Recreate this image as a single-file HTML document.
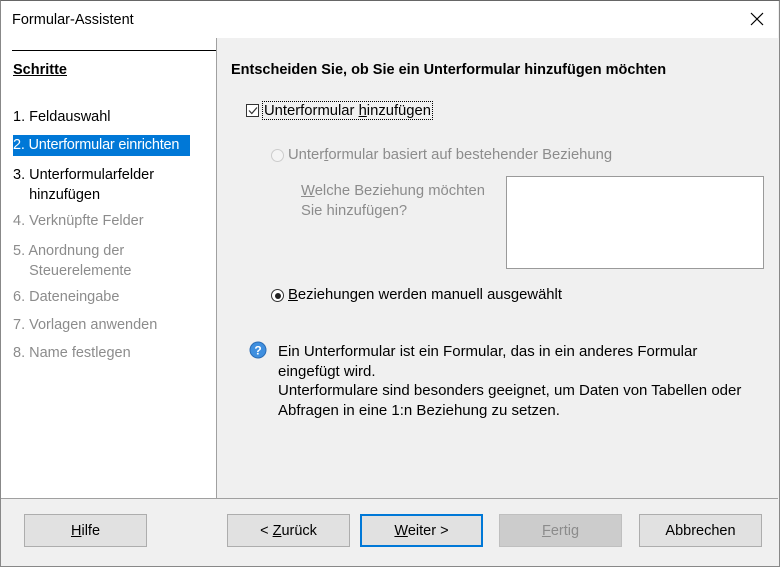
<!DOCTYPE html>
<html><head><meta charset="utf-8"><style>
*{margin:0;padding:0;box-sizing:border-box}
body{width:780px;height:567px;background:#f0f0f0;font-family:"Liberation Sans",sans-serif;font-size:14.5px;color:#000;position:relative;overflow:hidden}
.a{position:absolute;white-space:nowrap}
.frame{position:absolute;left:0;top:0;width:780px;height:567px;border:1px solid #888;border-top-color:#666}
.title{position:absolute;left:1px;top:1px;width:777px;height:37px;background:#fff}
.left{position:absolute;left:1px;top:38px;width:216px;height:460px;background:#fff;border-right:1px solid #a0a0a0}
.g{color:#8c8c8c}
.btn{position:absolute;top:514px;height:33px;width:123px;background:#e1e1e1;border:1px solid #adadad;text-align:center;line-height:33px;font-size:14.5px}
u{text-decoration:underline}
</style></head><body>
<div class="title"></div>
<div class="a" style="left:12px;top:12px;font-size:14.5px">Formular-Assistent</div>
<svg class="a" style="left:750px;top:12px" width="14" height="14"><path d="M1 1L13 13M13 1L1 13" stroke="#000" stroke-width="1.2"/></svg>
<div class="left"></div>
<div class="a" style="left:12px;top:50px;width:204px;border-top:1px solid #000"></div>
<div class="a" style="left:13px;top:62px;font-weight:bold;font-size:14.5px;text-decoration:underline">Schritte</div>
<div class="a" style="left:13px;top:109px">1. Feldauswahl</div>
<div class="a" style="left:13px;top:135px;background:#0078d7;color:#fff;padding:2px 1px 3px 0;width:177px;letter-spacing:-0.2px">2. Unterformular einrichten</div>
<div class="a" style="left:13px;top:165px;line-height:20px">3. Unterformularfelder<br>&nbsp;&nbsp;&nbsp;&nbsp;hinzufügen</div>
<div class="a g" style="left:13px;top:213px">4. Verknüpfte Felder</div>
<div class="a g" style="left:13px;top:241px;line-height:20px">5. Anordnung der<br>&nbsp;&nbsp;&nbsp;&nbsp;Steuerelemente</div>
<div class="a g" style="left:13px;top:289px">6. Dateneingabe</div>
<div class="a g" style="left:13px;top:317px">7. Vorlagen anwenden</div>
<div class="a g" style="left:13px;top:345px">8. Name festlegen</div>

<div class="a" style="left:231px;top:62px;font-weight:bold;font-size:14.5px">Entscheiden Sie, ob Sie ein Unterformular hinzufügen möchten</div>
<div class="a" style="left:246px;top:104px;width:13px;height:13px;border:1px solid #333;background:#fff"></div>
<svg class="a" style="left:248px;top:106px" width="10" height="9"><path d="M1 4.5L3.8 7.5L9 1.5" stroke="#333" fill="none" stroke-width="1.2"/></svg>
<div class="a" style="left:262px;top:101px;border:1px dotted #000;padding:1px 1px 0;font-size:14.8px">Unterformular <u>h</u>inzufügen</div>
<div class="a" style="left:271px;top:149px;width:13px;height:13px;border:1px solid #ccc;border-radius:50%;background:#f4f4f4"></div>
<div class="a g" style="left:288px;top:147px;font-size:14.8px">Unter<u>f</u>ormular basiert auf bestehender Beziehung</div>
<div class="a g" style="left:301px;top:181px;line-height:20px;font-size:14.8px"><u>W</u>elche Beziehung möchten<br>Sie hinzufügen?</div>
<div class="a" style="left:506px;top:176px;width:258px;height:93px;background:#fff;border:1px solid #9a9a9a"></div>
<div class="a" style="left:271px;top:289px;width:13px;height:13px;border:1px solid #333;border-radius:50%;background:#fff"></div>
<div class="a" style="left:274.5px;top:292.5px;width:6px;height:6px;border-radius:50%;background:#222"></div>
<div class="a" style="left:288px;top:287px;font-size:14.8px"><u>B</u>eziehungen werden manuell ausgewählt</div>
<svg class="a" style="left:249px;top:341px" width="18" height="18"><circle cx="9" cy="9" r="8" fill="#3f8fdf" stroke="#2a6cb5"/><text x="9" y="13.5" font-size="12" font-weight="bold" fill="#fff" text-anchor="middle" font-family="Liberation Sans">?</text></svg>
<div class="a" style="left:278px;top:342px;line-height:19.7px;font-size:15px">Ein Unterformular ist ein Formular, das in ein anderes Formular<br>eingefügt wird.<br>Unterformulare sind besonders geeignet, um Daten von Tabellen oder<br>Abfragen in eine 1:n Beziehung zu setzen.</div>

<div class="a" style="left:1px;top:498px;width:777px;border-top:1px solid #a0a0a0"></div>
<div class="btn" style="left:24px"><u>H</u>ilfe</div>
<div class="btn" style="left:227px">&lt; <u>Z</u>urück</div>
<div class="btn" style="left:360px;border:2px solid #0078d7;line-height:31px"><u>W</u>eiter &gt;</div>
<div class="btn" style="left:499px;background:#cccccc;border-color:#bfbfbf;color:#8c8c8c"><u>F</u>ertig</div>
<div class="btn" style="left:639px">Abbrechen</div>
<div class="frame"></div>
</body></html>
